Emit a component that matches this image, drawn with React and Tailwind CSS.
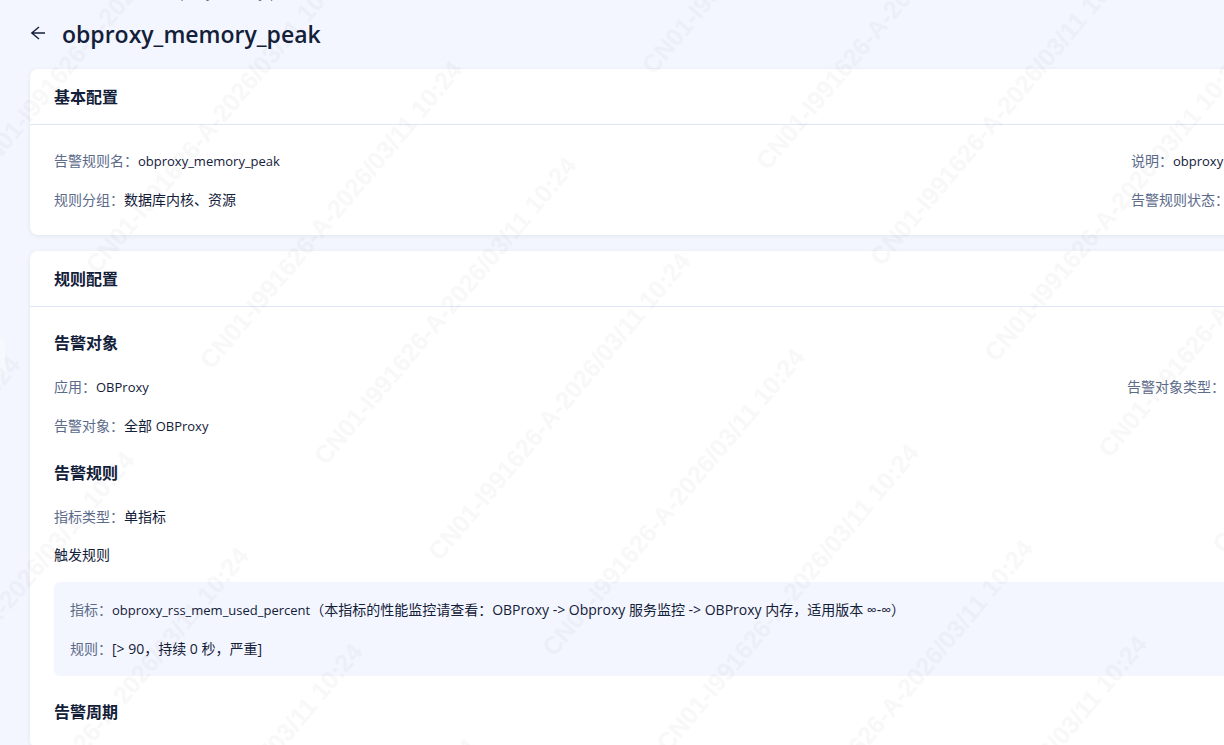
const WATERMARK = 'CN01-I991626-A-2026/03/11 10:24';

const Field = ({ label, children }) => (
  <div className="flex whitespace-nowrap">
    <dt className="text-[#5c6b8a]">{label}：</dt>
    <dd>{children}</dd>
  </div>
);

const Code = ({ children }) => <span className="text-[13px]">{children}</span>;

const Card = ({ title, children }) => (
  <section className="rounded-lg bg-white shadow-[0_1px_4px_rgba(19,32,57,0.08)]">
    <h2 className="flex h-14 items-center border-b border-[#dfe6f7] px-6 text-base font-semibold">{title}</h2>
    <div className="px-6">{children}</div>
  </section>
);

const SubTitle = ({ children }) => <h3 className="text-base font-semibold">{children}</h3>;

const Watermark = () => (
  <div className="pointer-events-none absolute inset-0 overflow-hidden opacity-[0.022]" aria-hidden="true">
    <div className="absolute top-[461px] left-[-474px] origin-top-left -rotate-50 font-['Liberation_Sans',sans-serif] text-[25px] font-bold text-black">
      {Array.from({ length: 11 }, (_, row) => (
        <div key={row} className="flex h-[149px]">
          {[0, 1, 2].map((col) => (
            <span key={col} className="w-[510px] shrink-0 whitespace-nowrap">
              {WATERMARK}
            </span>
          ))}
        </div>
      ))}
    </div>
  </div>
);

const App = () => {
  return (
    <div className="relative h-screen overflow-hidden bg-[#f3f6fe] font-['Open_Sans','Noto_Sans_CJK_SC',sans-serif] text-sm leading-[22px] text-[#132039]">
      <div className="min-w-[2232px] pl-[30px]">
        <nav className="flex h-[3px] items-end overflow-hidden pl-[136px] text-xs leading-[18px] text-[#5c6b8a]">
          <span>obproxy_memory_peak</span>
        </nav>
        <header className="flex h-[66px] items-center pb-1">
          <button type="button" aria-label="返回" className="mr-4 cursor-pointer pb-0.5">
            <svg className="size-4" viewBox="0 0 16 16" fill="none" stroke="currentColor" strokeWidth="1.4">
              <path d="M9 2 1.8 8 9 14M2 8h13" />
            </svg>
          </button>
          <h1 className="text-[23px] font-semibold">obproxy_memory_peak</h1>
        </header>

        <main className="flex flex-col gap-4">
          <Card title="基本配置">
            <dl className="grid grid-cols-2 gap-y-[17px] pt-[25px] pb-6">
              <Field label="告警规则名">
                <Code>obproxy_memory_peak</Code>
              </Field>
              <Field label="说明">
                <Code>obproxy</Code>
              </Field>
              <Field label="规则分组">数据库内核、资源</Field>
              <Field label="告警规则状态" />
            </dl>
          </Card>

          <Card title="规则配置">
            <div className="pt-6 pb-6">
              <SubTitle>告警对象</SubTitle>
              <dl className="mt-[21px] mb-6 grid grid-cols-2 gap-y-[17px] pr-2">
                <Field label="应用">
                  <Code>OBProxy</Code>
                </Field>
                <Field label="告警对象类型" />
                <Field label="告警对象">
                  全部 <Code>OBProxy</Code>
                </Field>
              </dl>

              <SubTitle>告警规则</SubTitle>
              <dl className="mt-[21px] mb-4">
                <Field label="指标类型">单指标</Field>
              </dl>
              <p className="mb-4">触发规则</p>
              <dl className="mb-6 flex flex-col gap-[17px] rounded-md bg-[#f3f6fe] px-4 pt-[17px] pb-4">
                <Field label="指标">
                  <Code>obproxy_rss_mem_used_percent</Code>
                  （本指标的性能监控请查看：OBProxy -&gt; Obproxy 服务监控 -&gt; OBProxy 内存，适用版本 ∞-∞）
                </Field>
                <Field label="规则">[&gt; 90，持续 0 秒，严重]</Field>
              </dl>

              <SubTitle>告警周期</SubTitle>
            </div>
          </Card>
        </main>
      </div>

      {/* 側邊欄收合把手 */}
      <div className="absolute top-[338px] left-0 h-9 w-[5px] rounded-r bg-white/30" />

      <Watermark />
    </div>
  );
};

export default App;
